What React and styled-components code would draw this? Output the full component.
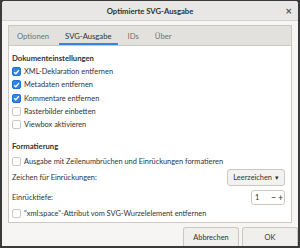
import styled, { createGlobalStyle } from "styled-components";

const GlobalStyle = createGlobalStyle`
  html, body {
    margin: 0;
    padding: 0;
    background: #3a3a3a;
  }
  body {
    font-family: Lato, "Noto Sans", sans-serif;
    color: #2e3436;
  }
`;

export default function App() {
  return (
    <>
      <GlobalStyle />
      <Window>
        <TitleBar>
          <Title>Optimierte SVG-Ausgabe</Title>
          <CloseButton>×</CloseButton>
        </TitleBar>
        <Body>
          <Notebook>
            <TabStrip>
              <Tab>Optionen</Tab>
              <Tab active>SVG-Ausgabe</Tab>
              <Tab>IDs</Tab>
              <Tab>Über</Tab>
            </TabStrip>
            <Panel>
              <SectionTitle>Dokumenteinstellungen</SectionTitle>
              <CheckList>
                <CheckRow checked label="XML-Deklaration entfernen" />
                <CheckRow checked label="Metadaten entfernen" />
                <CheckRow checked label="Kommentare entfernen" />
                <CheckRow label="Rasterbilder einbetten" />
                <CheckRow label="Viewbox aktivieren" />
              </CheckList>
              <SectionTitle spaced>Formatierung</SectionTitle>
              <CheckRow label="Ausgabe mit Zeilenumbrüchen und Einrückungen formatieren" />
              <FieldRow>
                <span>Zeichen für Einrückungen:</span>
                <ComboButton>
                  Leerzeichen <Arrow>▾</Arrow>
                </ComboButton>
              </FieldRow>
              <FieldRow>
                <span>Einrücktiefe:</span>
                <Spin>
                  <SpinValue>1</SpinValue>
                  <SpinBtn>−</SpinBtn>
                  <SpinBtn>+</SpinBtn>
                </Spin>
              </FieldRow>
              <CheckRow label={'"xml:space"-Attribut vom SVG-Wurzelelement entfernen'} />
            </Panel>
          </Notebook>
        </Body>
        <ActionArea>
          <DialogButton>Abbrechen</DialogButton>
          <DialogButton>OK</DialogButton>
        </ActionArea>
      </Window>
    </>
  );
}

const CheckRow = ({ checked, label }) => (
  <CheckLine>
    <Box checked={checked}>
      {checked && (
        <svg width="8" height="8" viewBox="0 0 8 8">
          <path d="M1.3 4.2 L3.2 6 L6.8 1.8" fill="none" stroke="#fff" strokeWidth="1.5" />
        </svg>
      )}
    </Box>
    <span>{label}</span>
  </CheckLine>
);

const Window = styled.div`
  width: 296px;
  height: 245px;
  margin: 1px 2px 0 2px;
  background: #f6f5f4;
  display: flex;
  flex-direction: column;
  font-size: 7.4px;
  border-radius: 3px 3px 0 0;
  overflow: hidden;
`;

const TitleBar = styled.div`
  height: 19px;
  flex-shrink: 0;
  background: #e8e7e6;
  border-bottom: 1px solid #d6d1cd;
  position: relative;
  display: flex;
  align-items: center;
  justify-content: center;
`;

const Title = styled.div`
  font-weight: bold;
  font-size: 7.7px;
  color: #2e3436;
`;

const CloseButton = styled.div`
  position: absolute;
  right: 6px;
  top: 3px;
  font-size: 11px;
  font-weight: bold;
  color: #555;
`;

const Body = styled.div`
  padding: 4px 6px 0 6px;
`;

const Notebook = styled.div`
  border: 1px solid #cdc7c2;
  display: flex;
  flex-direction: column;
`;

const TabStrip = styled.div`
  height: 19px;
  background: #e3e1de;
  border-bottom: 1px solid #cdc7c2;
  display: flex;
  padding-left: 2px;
  gap: 4px;
  font-size: 7.7px;
`;

const Tab = styled.div`
  padding: 0 6px;
  display: flex;
  align-items: center;
  color: ${(p) => (p.active ? "#2e3436" : "#6e7375")};
  box-shadow: ${(p) => (p.active ? "inset 0 -2px 0 #3584e4" : "none")};
`;

const Panel = styled.div`
  background: #fff;
  height: 176px;
  padding: 7px 6px 0 3px;
  box-sizing: border-box;
  display: flex;
  flex-direction: column;
`;

const SectionTitle = styled.div`
  font-weight: bold;
  font-size: 7.7px;
  height: 11px;
  line-height: 11px;
  margin-top: ${(p) => (p.spaced ? "10px" : "0")};
  margin-bottom: ${(p) => (p.spaced ? "2px" : "1px")};
`;

const CheckList = styled.div`
  display: flex;
  flex-direction: column;
`;

const CheckLine = styled.div`
  display: flex;
  align-items: center;
  gap: 3px;
  height: 13.3px;
  white-space: nowrap;
`;

const Box = styled.div`
  width: 9px;
  height: 9px;
  border-radius: 2px;
  box-sizing: border-box;
  display: flex;
  align-items: center;
  justify-content: center;
  background: ${(p) => (p.checked ? "#3584e4" : "#fff")};
  border: 1px solid ${(p) => (p.checked ? "#1c71d8" : "#cdc7c2")};
`;

const FieldRow = styled.div`
  display: flex;
  align-items: center;
  justify-content: space-between;
  height: 19px;

  & + & {
    margin-top: 1px;
  }
`;

const ComboButton = styled.div`
  height: 17px;
  box-sizing: border-box;
  padding: 0 5px;
  border: 1px solid #cdc7c2;
  border-radius: 3px;
  background: #f3f2f1;
  display: flex;
  align-items: center;
  gap: 3px;
`;

const Arrow = styled.span`
  font-size: 7px;
`;

const Spin = styled.div`
  width: 34px;
  height: 15px;
  box-sizing: border-box;
  border: 1px solid #cdc7c2;
  border-radius: 3px;
  display: flex;
  align-items: center;
  padding-left: 3px;
`;

const SpinValue = styled.span`
  flex: 1;
`;

const SpinBtn = styled.span`
  width: 7px;
  text-align: center;
  font-size: 9px;
`;

const ActionArea = styled.div`
  flex: 1;
  display: flex;
  justify-content: flex-end;
  align-items: flex-end;
  gap: 3px;
`;

const DialogButton = styled.div`
  width: 56px;
  height: 19px;
  box-sizing: border-box;
  border: 1px solid #cdc7c2;
  border-bottom: none;
  border-radius: 3px 3px 0 0;
  background: #f0efee;
  display: flex;
  align-items: center;
  justify-content: center;
`;
